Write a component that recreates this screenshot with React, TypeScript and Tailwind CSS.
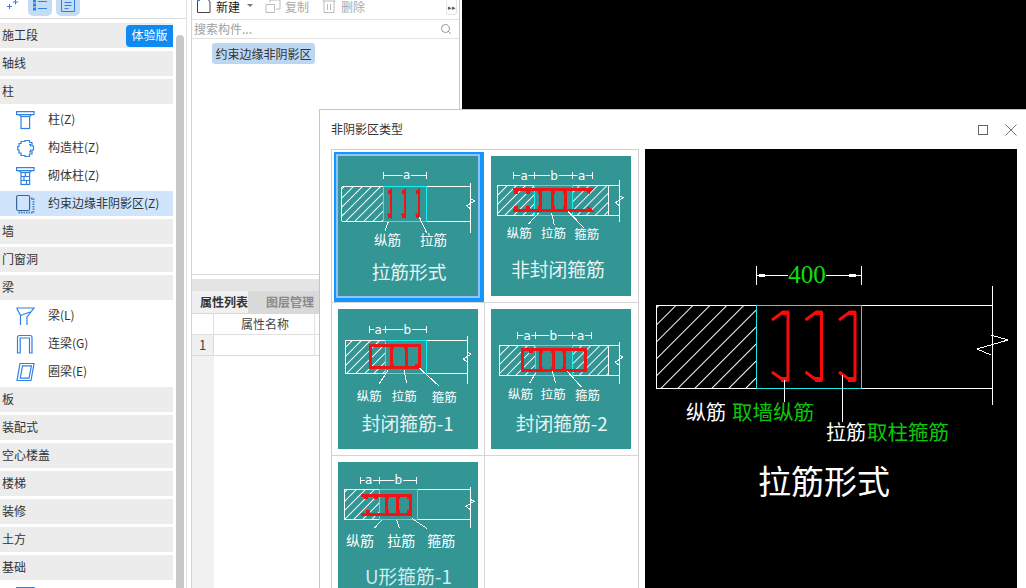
import type { ReactNode } from "react";
import { Search } from "lucide-react";

const BLUE = "#2f80e4";

// sidebar icons
function ColumnIcon() {
  return (
    <svg width="20" height="20" viewBox="0 0 20 20" fill="none" stroke={BLUE} strokeWidth="1.2">
      <path d="M0.6 1.6H18V4.6H0.6ZM3 4.6L5 6.5H13.6L15.6 4.6" />
      <rect x="5" y="6.5" width="8.6" height="12" />
    </svg>
  );
}

function ConstructColumnIcon() {
  return (
    <svg width="20" height="20" viewBox="0 0 20 20" fill="none" stroke={BLUE} strokeWidth="1.2">
      <path d="M5 3.5H9V2.5H13.5V4.5H16V8H17.5V12H16V16H13.5V18.5H9V17.5H5V15H3V12H1.8V8.5H3V5.5H5Z" />
      <path d="M13 6.5H14.5V8.5M14.5 11.5V14H13" />
    </svg>
  );
}

function BrickColumnIcon() {
  return (
    <svg width="20" height="20" viewBox="0 0 20 20" fill="none" stroke={BLUE} strokeWidth="1.2">
      <path d="M0.6 1.6H18V4.6H0.6ZM3 4.6L5 6.5H13.6L15.6 4.6" />
      <rect x="5" y="6.5" width="8.6" height="12" />
      <path d="M5 10.5H13.6M5 14.5H13.6M9.3 6.5V10.5M8 10.5V14.5M10.5 14.5V18.5" />
    </svg>
  );
}

function ShearWallIcon() {
  return (
    <svg width="20" height="20" viewBox="0 0 20 20" fill="none">
      <rect x="0.6" y="1.5" width="13" height="15" rx="1.5" stroke="#35679f" strokeWidth="1.2" />
      <path d="M15 4.5H17.5V18.5H3.5V17" stroke="#4a85c4" strokeWidth="2" strokeDasharray="1.5 1" />
    </svg>
  );
}

function BeamIcon() {
  return (
    <svg width="20" height="20" viewBox="0 0 20 20" fill="none" stroke={BLUE} strokeWidth="1.2">
      <path d="M0.6 2H18L11 11V19M0.6 2L4.5 9.5V19M4.5 9.5L14 6" />
    </svg>
  );
}

function LinkBeamIcon() {
  return (
    <svg width="20" height="20" viewBox="0 0 20 20" fill="none" stroke={BLUE} strokeWidth="1.2">
      <path d="M1.5 19V3.5Q1.5 1.5 3.5 1.5H14Q16 1.5 16 3.5V19H13.5V4H4.2V19Z" />
    </svg>
  );
}

function RingBeamIcon() {
  return (
    <svg width="20" height="20" viewBox="0 0 20 20" fill="none" stroke={BLUE} strokeWidth="1.2">
      <path d="M4 1.5H18L15 18.5H1Z" />
      <path d="M6.5 3.8H15.4L13 16.2H4.2Z" />
    </svg>
  );
}

function SidebarHead({ label, badge }: { label: string; badge?: boolean }) {
  return (
    <div className="flex items-center justify-between h-[25px] mb-[3px] bg-[#ececec] pl-[2px]">
      <span className="mb-px">{label}</span>
      {badge && (
        <span className="flex items-center justify-center w-[47px] h-[22px] pb-px bg-[#0f8af2] text-white rounded-l-[4px]">体验版</span>
      )}
    </div>
  );
}

function SidebarItem({ icon, label, active }: { icon: ReactNode; label: string; active?: boolean }) {
  return (
    <div className={`flex items-center h-[25px] mb-[3px] pl-[16px] ${active ? "bg-[#d0e5fb]" : ""}`}>
      <span className="w-[32px] shrink-0">{icon}</span>
      <span className="mb-px">{label}</span>
    </div>
  );
}

function Sidebar() {
  return (
    <div className="w-[187px] shrink-0 flex flex-col border-r border-[#e2e2e2]">
      <div className="h-[19px] shrink-0 flex border-b border-[#dcdcdc]">
        <svg className="ml-[6px] mt-[-1px]" width="12" height="12" viewBox="0 0 12 12" fill="none" stroke="#2f80e4" strokeWidth="1">
          <path d="M1 7.5H6M3.5 5V10M7 3H12M9.5 0.5V5.5" />
        </svg>
        <div className="ml-[10px] w-[24px] h-[16px] bg-[#c5dcf5] rounded-b-[5px] flex items-start justify-center">
          <svg width="16" height="12" viewBox="0 0 16 12" fill="none" stroke="#2f80e4" strokeWidth="1">
            <path d="M6 1.5H15M6 8.5H15" />
            <rect x="1.5" y="0" width="2" height="2" />
            <rect x="1.5" y="4" width="2" height="2" />
            <rect x="1.5" y="8" width="2" height="2" />
          </svg>
        </div>
        <div className="ml-[4px] w-[24px] h-[16px] bg-[#c5dcf5] rounded-b-[5px] flex items-start justify-center">
          <svg width="16" height="13" viewBox="0 0 16 13" fill="none" stroke="#2f80e4" strokeWidth="1">
            <path d="M1.5 0V11.5H14.5V0M4.5 2.5H11.5M4.5 5.5H11.5M4.5 8.5H8.5" />
          </svg>
        </div>
      </div>
      <div className="flex flex-1 min-h-0 overflow-hidden">
        <div className="w-[173px] shrink-0 pt-[4px]">
          <SidebarHead label="施工段" badge />
          <SidebarHead label="轴线" />
          <SidebarHead label="柱" />
          <SidebarItem icon={<ColumnIcon />} label="柱(Z)" />
          <SidebarItem icon={<ConstructColumnIcon />} label="构造柱(Z)" />
          <SidebarItem icon={<BrickColumnIcon />} label="砌体柱(Z)" />
          <SidebarItem icon={<ShearWallIcon />} label="约束边缘非阴影区(Z)" active />
          <SidebarHead label="墙" />
          <SidebarHead label="门窗洞" />
          <SidebarHead label="梁" />
          <SidebarItem icon={<BeamIcon />} label="梁(L)" />
          <SidebarItem icon={<LinkBeamIcon />} label="连梁(G)" />
          <SidebarItem icon={<RingBeamIcon />} label="圈梁(E)" />
          <SidebarHead label="板" />
          <SidebarHead label="装配式" />
          <SidebarHead label="空心楼盖" />
          <SidebarHead label="楼梯" />
          <SidebarHead label="装修" />
          <SidebarHead label="土方" />
          <SidebarHead label="基础" />
          <SidebarItem icon={<ColumnIcon />} label="" />
        </div>
        <div className="flex-1 pl-[3px] pt-[16px]">
          <div className="w-[8px] h-full bg-[#c8c8c8] rounded-t-[4px]" />
        </div>
      </div>
    </div>
  );
}

function MiddlePanel() {
  return (
    <div className="ml-[4px] w-[269px] shrink-0 flex flex-col border-x border-[#d4d4d4] border-r-[#c8c8c8]">
      <div className="h-[20px] shrink-0 flex items-start border-b border-[#e2e2e2] leading-[14px]">
        <svg className="ml-[4px]" width="16" height="13" viewBox="0 0 16 13" fill="none" stroke="#444" strokeWidth="1">
          <path d="M1.5 1V12.5H14V2L12.5 0" />
          <path d="M1 0H4" stroke="#2f80e4" strokeWidth="2" />
        </svg>
        <span className="ml-[4px] text-[#222]">新建</span>
        <span className="ml-[7px] mt-[4px] w-0 h-0 border-x-[3px] border-x-transparent border-t-[3px] border-t-[#777]" />
        <svg className="ml-[12px]" width="16" height="13" viewBox="0 0 16 13" fill="none" stroke="#bbb" strokeWidth="1">
          <path d="M1 4.5H9.5V12.5H1ZM5 2.5V0M5 0H15V9H11" />
        </svg>
        <span className="ml-[4px] text-[#aaa]">复制</span>
        <svg className="ml-[13px]" width="14" height="13" viewBox="0 0 14 13" fill="none" stroke="#bbb" strokeWidth="1">
          <path d="M0.5 1H13.5M2 1V12.5H12V1M5.5 4V10M8.5 4V10" />
        </svg>
        <span className="ml-[5px] text-[#aaa]">删除</span>
        <span className="ml-auto mr-[2px] w-[11px] h-[15px] flex items-center justify-center border border-t-0 border-[#e4e4e4] rounded-b-[3px] text-[#555] text-[7px] leading-none">▸▸</span>
      </div>
      <div className="h-[19px] shrink-0 flex items-center justify-between border-b border-[#e2e2e2] pl-[2px] pr-[7px] text-[#a0a0a0]">
        <span className="mb-px">搜索构件...</span>
        <Search size={12} color="#999" />
      </div>
      <div className="h-[236px] shrink-0 border-b border-[#dcdcdc] pt-[4px] pl-[20px]">
        <span className="inline-flex items-center justify-center w-[103px] h-[21px] bg-[#bcd7f2] rounded-[3px] text-[#333]">约束边缘非阴影区</span>
      </div>
      <div className="mt-[4px] h-[12px] shrink-0 bg-[#e4e4e4]" />
      <div className="h-[23px] shrink-0 flex border-b border-[#d8d8d8] font-bold">
        <span className="w-[56px] flex items-center pl-[8px] whitespace-nowrap bg-[#f0f0f0] text-[#333]">属性列表</span>
        <span className="w-[71px] flex items-center justify-end pr-[5px] bg-[#d9d9d9] text-[#8a8a8a]">图层管理</span>
      </div>
      <div className="h-[21px] shrink-0 flex border-b border-[#e0e0e0]">
        <span className="w-[22px] border-r border-[#e0e0e0]" />
        <span className="w-[101px] flex items-center justify-center pl-[2px] border-r border-[#e0e0e0] text-[#444]">属性名称</span>
      </div>
      <div className="h-[21px] shrink-0 flex border-b border-[#dcdcdc]">
        <span className="w-[22px] flex items-center justify-center bg-[#f0f0f0] border-r border-[#dcdcdc] text-[13px] text-[#444]">1</span>
        <span className="w-[101px] border-r border-[#e0e0e0]" />
      </div>
      <div className="flex-1 w-[22px] bg-[#f1f1f1]" />
    </div>
  );
}

// thumbnail drawing helpers
const FONT = "'Noto Sans CJK SC', sans-serif";

type Line = [number, number, number, number];

function Label({ x, y, size, children, fill = "#fff" }: { x: number; y: number; size: number; children: ReactNode; fill?: string }) {
  return (
    <text x={x} y={y - size * 0.15} fontSize={size} fill={fill} fontFamily={FONT} dominantBaseline="central">
      {children}
    </text>
  );
}

function Beam(props: {
  id: string;
  x1: number;
  c1: number;
  c2: number;
  hatchEnd?: number;
  wx: number;
  y1: number;
  y2: number;
  wy1: number;
  wy2: number;
}) {
  const { id, x1, c1, c2, hatchEnd, wx, y1, y2, wy1, wy2 } = props;
  const mid = (y1 + y2) / 2;
  return (
    <g fill="none">
      <defs>
        <pattern id={id} width="6.4" height="6.4" patternUnits="userSpaceOnUse" patternTransform="rotate(45)">
          <line x1="0.5" y1="0" x2="0.5" y2="6.4" stroke="#fff" strokeWidth="1" />
        </pattern>
      </defs>
      <rect x={x1} y={y1} width={c1 - x1} height={y2 - y1} fill={`url(#${id})`} />
      {hatchEnd && <rect x={c2} y={y1} width={hatchEnd - c2} height={y2 - y1} fill={`url(#${id})`} />}
      <path d={`M${x1} ${y1}H${wx}M${x1} ${y2}H${wx}M${x1} ${y1}V${y2}M${wx} ${wy1}V${wy2}`} stroke="#fff" />
      {hatchEnd && <path d={`M${hatchEnd} ${y1}V${y2}`} stroke="#fff" />}
      <rect x={c1} y={y1} width={c2 - c1} height={y2 - y1} stroke="#19f0f0" />
      <path d={`M${wx} ${mid - 5}L${wx + 4} ${mid - 3}L${wx - 4} ${mid + 2}L${wx} ${mid + 5}`} stroke="#fff" strokeWidth="1" />
    </g>
  );
}

function Dim({ y, ticks, gaps, size = 12 }: { y: number; ticks: number[]; gaps: { x: number; t: string }[]; size?: number }) {
  return (
    <g>
      {ticks.map((x) => (
        <line key={x} x1={x} x2={x} y1={y - 3.5} y2={y + 3.5} stroke="#fff" />
      ))}
      <line x1={ticks[0]} x2={ticks[ticks.length - 1]} y1={y} y2={y} stroke="#fff" />
      {gaps.map((g) => (
        <text
          key={g.x}
          x={g.x}
          y={y}
          fontSize={size}
          fill="#fff"
          fontFamily="'DejaVu Sans', sans-serif"
          textAnchor="middle"
          dominantBaseline="central"
          stroke="#339594"
          strokeWidth="3"
          paintOrder="stroke"
        >
          {g.t}
        </text>
      ))}
    </g>
  );
}

function Leaders({ lines }: { lines: Line[] }) {
  return (
    <g stroke="#fff" strokeWidth="1">
      {lines.map((l) => (
        <line key={l.join()} x1={l[0]} y1={l[1]} x2={l[2]} y2={l[3]} />
      ))}
    </g>
  );
}

// rebar with the small knobs where bars cross
function Red({ d, knobs = [], w = 3 }: { d: string; knobs?: [number, number][]; w?: number }) {
  return (
    <g>
      <path d={d} stroke="#f01414" strokeWidth={w} fill="none" strokeLinejoin="miter" />
      {knobs.map(([x, y]) => (
        <rect key={`${x}-${y}`} x={x - 2} y={y - 2} width="4" height="4" fill="#f01414" />
      ))}
    </g>
  );
}

function Thumb({ children, selected }: { children: ReactNode; selected?: boolean }) {
  return (
    <svg
      width="140"
      height="140"
      viewBox="0 0 140 140"
      shapeRendering="crispEdges"
      className={`block bg-[#339594] ${selected ? "shadow-[0_0_0_2px_#8fc3ff,1px_1px_0_5px_#1596ff]" : ""}`}
    >
      {children}
    </svg>
  );
}

function Card1() {
  return (
    <Thumb selected>
      <Beam id="h1" x1={3.7} c1={45.3} c2={88.7} wx={132.7} y1={30.7} y2={65} wy1={27} wy2={76.7} />
      <Dim y={19} ticks={[45.3, 88.7]} gaps={[{ x: 68.7, t: "a" }]} />
      <Red
        w={2.2}
        d="M50 37L53 34V61L50 58M64 37L67 34V61L64 58M78 37L81 34V61L78 58"
        knobs={[[52, 36], [66, 36], [80, 36], [52, 60], [66, 60], [80, 60]]}
      />
      <Leaders lines={[[50.3, 65.7, 47, 74.7], [81.3, 61, 88.7, 77]]} />
      <Label x={36} y={84.7} size={13.5}>纵筋</Label>
      <Label x={82} y={84.7} size={13.5}>拉筋</Label>
      <Label x={33.7} y={117} size={18.7} fill="#e6f4f4">拉筋形式</Label>
    </Thumb>
  );
}

function Card2() {
  return (
    <Thumb>
      <Beam id="h2" x1={6.3} c1={43.3} c2={81.3} hatchEnd={117.3} wx={128.3} y1={29.7} y2={59.7} wy1={24} wy2={66.3} />
      <Dim
        y={19.7}
        ticks={[22.3, 43.3, 81.3, 101.3]}
        gaps={[{ x: 33.3, t: "a" }, { x: 63, t: "b" }, { x: 90.7, t: "a" }]}
      />
      <Red
        d="M22.3 33.3H100L97 37M22.3 54.7H100L97 51M49 33.3V54.7M61.7 33.3V54.7M74 33.3V54.7"
        knobs={[[25, 36], [37, 36], [49, 36], [61.7, 36], [74, 36], [25, 52], [37, 52], [49, 52], [61.7, 52], [74, 52]]}
      />
      <Leaders lines={[[47.3, 57.3, 37.3, 68.3], [60.7, 57.3, 63.3, 69], [77.3, 55.7, 93.3, 72.3]]} />
      <Label x={15.7} y={78.3} size={12.5}>纵筋</Label>
      <Label x={50} y={78.3} size={12.5}>拉筋</Label>
      <Label x={83.3} y={79} size={12.5}>箍筋</Label>
      <Label x={20} y={115} size={18.8} fill="#e6f4f4">非封闭箍筋</Label>
    </Thumb>
  );
}

function Card3() {
  return (
    <Thumb>
      <Beam id="h3" x1={7.3} c1={47.3} c2={88.7} wx={129.3} y1={31.3} y2={64.7} wy1={27.3} wy2={74.7} />
      <Dim y={20.7} ticks={[31.3, 47.3, 88.7]} gaps={[{ x: 40.3, t: "a" }, { x: 69.3, t: "b" }]} />
      <Red
        d="M32 36H81.3V58.7H32ZM53.7 36V58.7M68 36V58.7"
        knobs={[[53.7, 38], [68, 38], [79, 57], [53.7, 57]]}
      />
      <Leaders lines={[[50.3, 60.7, 41.3, 74.7], [66, 60.7, 68.7, 74], [81.3, 59, 101.3, 77.3]]} />
      <Label x={18.7} y={88} size={12.5}>纵筋</Label>
      <Label x={53.7} y={88} size={12.5}>拉筋</Label>
      <Label x={93.7} y={89} size={12.5}>箍筋</Label>
      <Label x={23.7} y={116.7} size={18.8} fill="#e6f4f4">封闭箍筋-1</Label>
    </Thumb>
  );
}

function Card4() {
  return (
    <Thumb>
      <Beam id="h4" x1={8.3} c1={44.7} c2={81.3} hatchEnd={117.3} wx={128} y1={36.3} y2={66} wy1={33} wy2={74.7} />
      <Dim
        y={26.7}
        ticks={[26, 44.7, 81.3, 100]}
        gaps={[{ x: 36.3, t: "a" }, { x: 62.3, t: "b" }, { x: 89.7, t: "a" }]}
      />
      <Red
        d="M31.3 40H94V61.7H31.3ZM49.7 40V61.7M62.3 40V61.7M73 40V61.7"
        knobs={[[40, 42], [49.7, 42], [62.3, 42], [73, 42], [49.7, 60], [62.3, 60], [73, 60]]}
      />
      <Leaders lines={[[44.7, 64, 38.7, 74], [61.3, 62.3, 64.7, 74], [76.3, 62.3, 90.3, 78]]} />
      <Label x={17} y={86.7} size={12.5}>纵筋</Label>
      <Label x={49.7} y={86.7} size={12.5}>拉筋</Label>
      <Label x={84} y={87.5} size={12.5}>箍筋</Label>
      <Label x={24.7} y={116.3} size={18.8} fill="#e6f4f4">封闭箍筋-2</Label>
    </Thumb>
  );
}

function Card5() {
  return (
    <Thumb>
      <Beam id="h5" x1={6.3} c1={41.3} c2={79.3} wx={132} y1={27.3} y2={57.3} wy1={24.7} wy2={66.3} />
      <Dim y={18} ticks={[22, 41.3, 78.7]} gaps={[{ x: 30.7, t: "a" }, { x: 60.3, t: "b" }]} />
      <Red
        d="M22.7 33H72V52.3H22.7M48.7 33V52.3M59.7 33V52.3"
        knobs={[[28, 35], [38, 35], [48.7, 35], [59.7, 35], [71, 35], [30, 50], [48.7, 50], [59.7, 50], [71, 50]]}
      />
      <Leaders lines={[[43.7, 58, 36.3, 66.3], [58.7, 58, 61.3, 66.3], [73.7, 56.3, 88.7, 66.3]]} />
      <Label x={8} y={79.7} size={14}>纵筋</Label>
      <Label x={49.3} y={79.7} size={14}>拉筋</Label>
      <Label x={89.3} y={79.7} size={14}>箍筋</Label>
      <Label x={27} y={116.3} size={18.8} fill="#cdeef0">U形箍筋-1</Label>
    </Thumb>
  );
}

function TypeGrid() {
  return (
    <div className="w-[308px] h-[440px] shrink-0 border border-[#cfcfcf] grid grid-cols-2 grid-rows-[153px_153px_1fr]">
      <div className="border-b border-[#d6d6d6] pt-[6px] pl-[6px]"><Card1 /></div>
      <div className="border-b border-[#d6d6d6] pt-[6px] pl-[6px]"><Card2 /></div>
      <div className="border-b border-r border-[#d6d6d6] pt-[6px] pl-[6px]"><Card3 /></div>
      <div className="border-b border-[#d6d6d6] pt-[6px] pl-[6px]"><Card4 /></div>
      <div className="border-r border-[#d6d6d6] pt-[6px] pl-[6px]"><Card5 /></div>
    </div>
  );
}

function Preview() {
  // svg coords are offset from the black panel's corner (645, 149)
  const hook = (x: number) =>
    `M${x - 16} 171L${x - 5} 163H${x}V231H${x - 5}L${x - 16} 223`;
  const knobs = [143, 176.5, 210];
  return (
    <svg width="372" height="439" viewBox="0 0 372 439" shapeRendering="crispEdges" className="block shrink-0 bg-black ml-[6px]">
      <defs>
        <pattern id="prev-hatch" width="12" height="12" patternUnits="userSpaceOnUse" patternTransform="rotate(45)">
          <line x1="0.5" y1="0" x2="0.5" y2="12" stroke="#fff" strokeWidth="1" />
        </pattern>
      </defs>
      <rect x="11" y="156" width="100" height="83" fill="url(#prev-hatch)" />
      <path d="M11 156H347M11 239H347M11 156V239M347 137V256" stroke="#fff" fill="none" />
      <rect x="111.5" y="156" width="105" height="83" stroke="#19e6e6" fill="none" />
      <path d="M346 186L363 191L332 200L346 206" stroke="#fff" fill="none" />
      <path d="M111.5 117V136M216.5 117V136M111.5 126H143M181 126H216.5" stroke="#fff" fill="none" />
      <path d="M114 126H120M204 126H211" stroke="#fff" strokeWidth="3" />
      <text x="162" y="125" fontSize="25" fill="#0be00b" fontFamily="'Liberation Serif', serif" textAnchor="middle" dominantBaseline="central">400</text>
      <g stroke="#f80a0a" strokeWidth="3" fill="none" strokeLinejoin="round" shapeRendering="auto">
        <path d={hook(143)} />
        <path d={hook(176.5)} />
        <path d={hook(210)} />
      </g>
      {knobs.map((x) => (
        <g key={x} fill="#f80a0a">
          <rect x={x - 7} y={162} width="7" height="4" />
          <rect x={x - 7} y={228} width="7" height="5" />
        </g>
      ))}
      <path d="M139 231V253M197 226V273" stroke="#fff" fill="none" />
      <Label x={41} y={265} size={20}>纵筋</Label>
      <Label x={87} y={265} size={20.5} fill="#0bc80b">取墙纵筋</Label>
      <Label x={181} y={285} size={20}>拉筋</Label>
      <Label x={222} y={285} size={20.5} fill="#0bc80b">取柱箍筋</Label>
      <Label x={113} y={336} size={33}>拉筋形式</Label>
    </svg>
  );
}

function Dialog() {
  return (
    <div className="absolute left-[319px] top-[109px] right-0 bottom-0 bg-white border-l border-t border-[#c4c4c4] flex flex-col">
      <div className="h-[39px] shrink-0 flex items-center pl-[11px] text-[#333]">
        <span className="mb-px">非阴影区类型</span>
        <svg className="ml-auto" width="10" height="10" viewBox="0 0 10 10" fill="none" stroke="#666">
          <rect x="0.5" y="0.5" width="9" height="9" />
        </svg>
        <svg className="ml-[17px] mr-[9px]" width="12" height="12" viewBox="0 0 12 12" fill="none" stroke="#777">
          <path d="M0.5 0.5L11.5 11.5M11.5 0.5L0.5 11.5" />
        </svg>
      </div>
      <div className="flex flex-1 min-h-0 pl-[11px]">
        <TypeGrid />
        <Preview />
      </div>
    </div>
  );
}

export default function App() {
  return (
    <div className="relative flex w-[1026px] h-[588px] overflow-hidden bg-white text-[12px] text-[#333] font-['Noto_Sans_CJK_SC',sans-serif]">
      <Sidebar />
      <MiddlePanel />
      <div className="ml-[2px] flex-1 bg-black" />
      <Dialog />
    </div>
  );
}
